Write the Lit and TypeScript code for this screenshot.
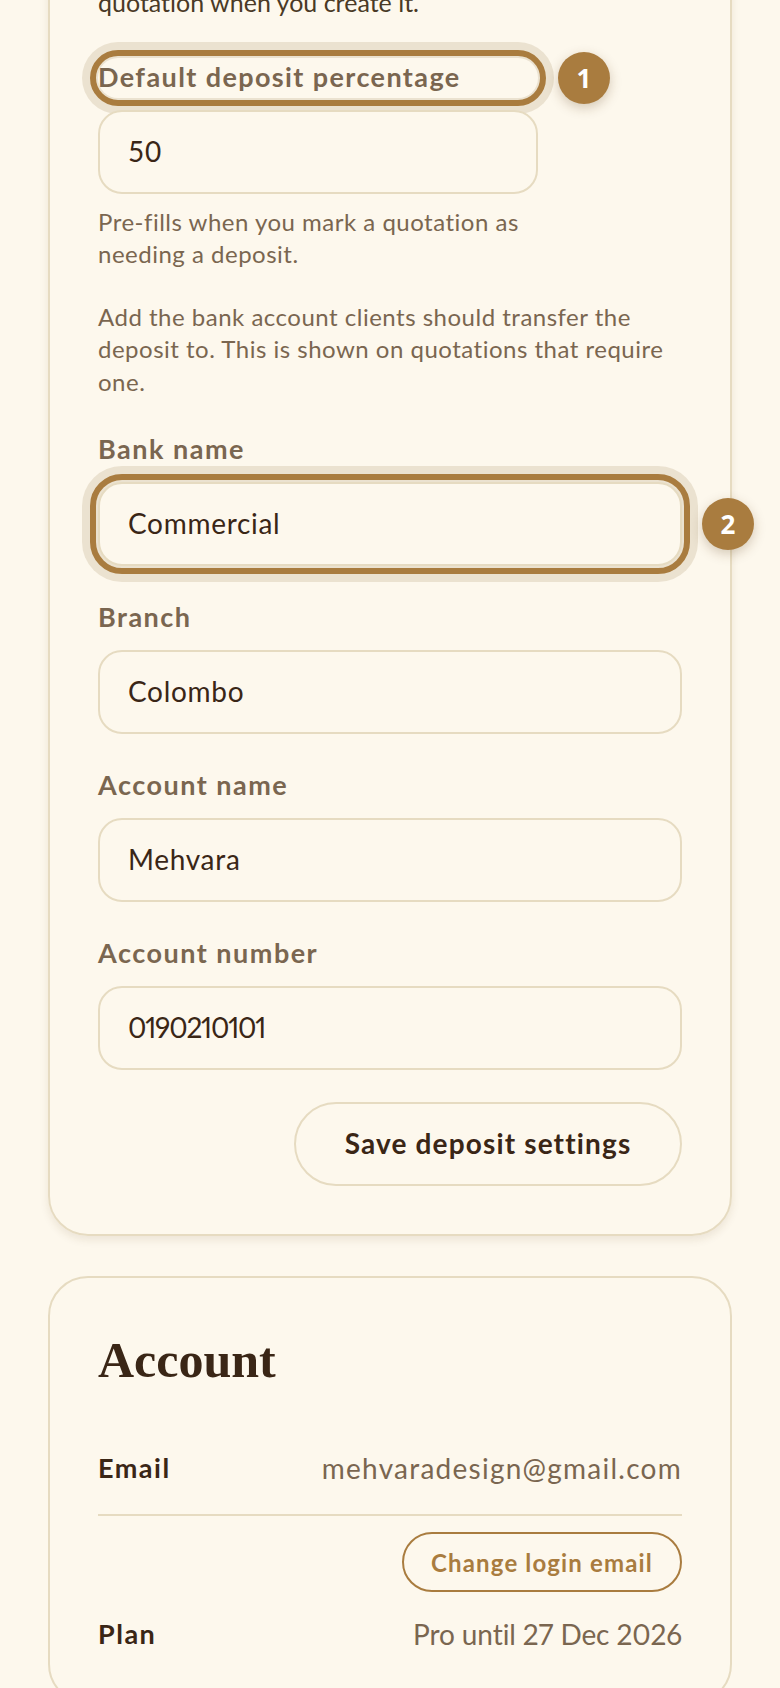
import { LitElement, html, css } from "lit";
import { customElement } from "lit/decorators.js";

const field = (label: string, value: string, hl = false, num = false) => html`
  <div class="field">
    <div class="label">${label}</div>
    ${hl
      ? html`<div class="anchor"><div class="input ring">${value}</div><div class="badge b2">2</div></div>`
      : html`<div class="input ${num ? "num" : ""}">${value}</div>`}
  </div>`;

@customElement("app-root")
export class AppRoot extends LitElement {
  static styles = css`
    :host { display: block; width: 780px; height: 1688px; overflow: hidden; background: #fdf8ed;
      font-family: "Lato", "Noto Sans", sans-serif; color: #3a2616; font-variant-ligatures: none; }
    .page { padding: 0 48px; display: flex; flex-direction: column; gap: 40px; }
    .card { border: 2px solid #e6dbc1; border-radius: 40px; padding: 48px; }
    .first { margin-top: -64px; box-shadow: 0 4px 8px rgba(90, 60, 20, 0.1); }
    .intro { font-size: 25px; line-height: 32px; height: 32px; margin-bottom: 40px; color: #4a3a26; }
    .narrow { width: 440px; position: relative; }
    .label { font-size: 27px; font-weight: 700; line-height: 38px; padding-bottom: 2px; margin-bottom: 12px; color: #7a6650; letter-spacing: 1.5px; }
    .ring { outline: 6px solid #a97c3f; outline-offset: 2px; box-shadow: 0 0 0 16px #ebe2d0; border-radius: 24px; }
    .label.ring { border-radius: 22px; letter-spacing: 1.4px; }
    .input { position: relative; box-sizing: border-box; height: 84px; border: 2px solid #e6dbc1; border-radius: 24px;
      background: #fdf8ed; padding: 0 28px 2px; display: flex; align-items: center; font-size: 28px; color: #3a2616; letter-spacing: 0.7px; }
    .num { font-variant-numeric: proportional-nums; letter-spacing: -1.2px; }
    .help { font-size: 24px; line-height: 32.4px; color: #7a6650; letter-spacing: 0.5px; margin: 12px 0 0; }
    .p2 { margin: 30px 0 32px; }
    .field { margin-bottom: 32px; }
    .anchor { position: relative; }
    .badge { position: absolute; width: 52px; height: 52px; border-radius: 50%; background: #a97c3f; color: #fff;
      font-family: "Open Sans", sans-serif; font-weight: 700; font-size: 26px; display: flex; align-items: center; justify-content: center;
      box-shadow: 0 4px 12px rgba(90, 60, 20, 0.25); }
    .b1 { left: 460px; top: -6px; }
    .b2 { left: 604px; top: 16px; }
    .actions { display: flex; justify-content: flex-end; }
    .save { box-sizing: border-box; height: 84px; width: 388px; border: 2px solid #e6dbc1; border-radius: 42px; display: flex; align-items: center;
      justify-content: center; padding-bottom: 2px; font-size: 28px; font-weight: 700; letter-spacing: 1.15px; color: #3a2616; }
    h2 { margin: 2px 0 56px; font-family: "Liberation Serif", serif; font-weight: 700; font-size: 50px; line-height: 64px; color: #3a2616; }
    .row { display: flex; justify-content: space-between; align-items: center; font-size: 28px; line-height: 40px; }
    .row b { font-weight: 700; font-size: 27px; letter-spacing: 1.5px; }
    .row span { color: #7a6650; letter-spacing: 1.25px; font-variant-numeric: proportional-nums; }
    .row span.plan { letter-spacing: -0.1px; }
    .em { padding-bottom: 26px; border-bottom: 2px solid #e6dbc1; }
    .change-wrap { display: flex; justify-content: flex-end; margin: 16px 0 22px; }
    .change { box-sizing: border-box; height: 60px; width: 280px; border: 2px solid #a97c3f; border-radius: 30px; color: #a97c3f; display: flex;
      align-items: center; justify-content: center; font-size: 24px; font-weight: 700; letter-spacing: 1.15px; }
  `;

  render() {
    return html`<div class="page">
      <section class="card first">
        <div class="intro">quotation when you create it.</div>
        <div class="narrow">
          <div class="label ring">Default deposit percentage</div>
          <div class="badge b1">1</div>
          <div class="input">50</div>
          <p class="help">Pre-fills when you mark a quotation as needing a deposit.</p>
        </div>
        <p class="help p2">Add the bank account clients should transfer the deposit to. This is shown on quotations that require one.</p>
        ${field("Bank name", "Commercial", true)}
        ${field("Branch", "Colombo")}
        ${field("Account name", "Mehvara")}
        ${field("Account number", "0190210101", false, true)}
        <div class="actions"><div class="save">Save deposit settings</div></div>
      </section>
      <section class="card">
        <h2>Account</h2>
        <div class="row em"><b>Email</b><span>mehvaradesign@gmail.com</span></div>
        <div class="change-wrap"><div class="change">Change login email</div></div>
        <div class="row"><b>Plan</b><span class="plan">Pro until 27 Dec 2026</span></div>
      </section>
    </div>`;
  }
}
